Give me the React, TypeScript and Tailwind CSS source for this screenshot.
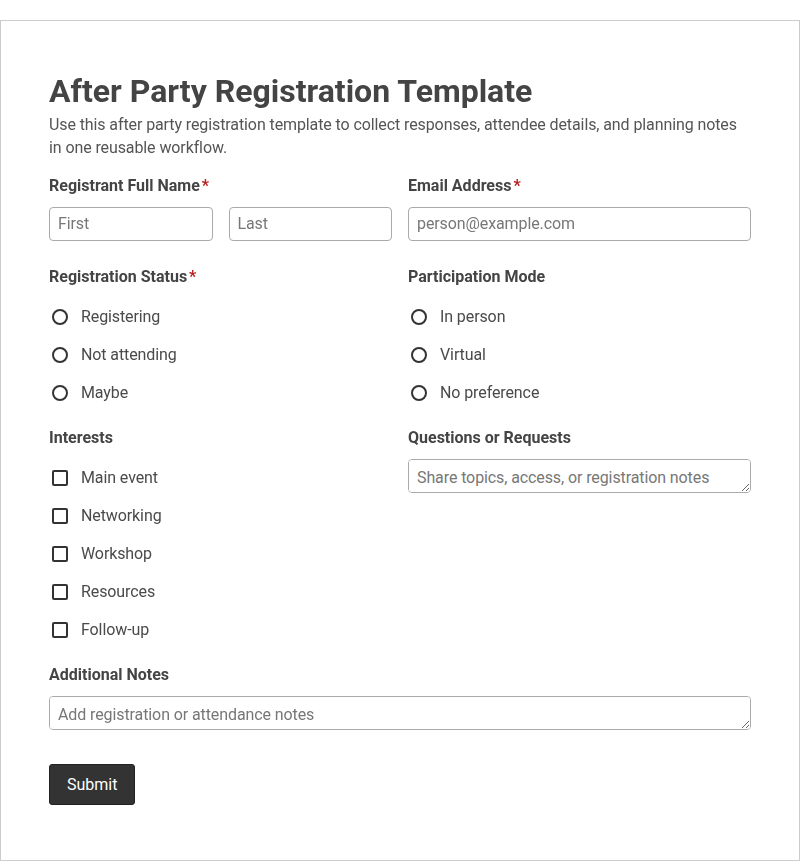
import React from "react";

const Req = () => <span className="text-[#b91c1c] ml-[2px]">*</span>;

const Label = ({ children }: { children: React.ReactNode }) => (
  <div className="pt-px text-base font-bold leading-6 text-[#444]">{children}</div>
);

const inputCls =
  "h-[34px] w-full rounded-[4px] border border-[#aaa] bg-white px-2 text-base tracking-[-0.1px] text-[#444] placeholder:text-[#777] outline-none";

const Radio = ({ label }: { label: string }) => (
  <label className="flex h-[38px] items-center">
    <span className="ml-[3px] h-4 w-4 rounded-full border-2 border-[#333]" />
    <span className="ml-[13px] text-base tracking-[-0.1px] text-[#4a4a4a]">{label}</span>
  </label>
);

const Check = ({ label }: { label: string }) => (
  <label className="flex h-[38px] items-center">
    <span className="ml-[3px] h-4 w-4 rounded-[2px] border-2 border-[#333]" />
    <span className="ml-[13px] text-base tracking-[-0.1px] text-[#4a4a4a]">{label}</span>
  </label>
);

export default function App() {
  return (
    <div className="min-h-screen bg-white pt-5 font-['Roboto',sans-serif]">
      <form className="border border-[#ccc] px-12 pt-12 pb-[55px]">
        <h1 className="text-[32px] font-bold leading-[44px] text-[#444]">
          After Party Registration Template
        </h1>
        <p className="mb-[14px] text-base leading-[23px] tracking-[-0.1px] text-[#555]">
          Use this after party registration template to collect responses, attendee details, and planning notes
          in one reusable workflow.
        </p>

        <div className="mb-[23px] grid grid-cols-2 gap-x-4">
          <div>
            <Label>
              Registrant Full Name<Req />
            </Label>
            <div className="mt-[9px] grid grid-cols-2 gap-x-4">
              <input className={`${inputCls} pb-[2px]`} placeholder="First" />
              <input className={`${inputCls} pb-[2px]`} placeholder="Last" />
            </div>
          </div>
          <div>
            <Label>
              Email Address<Req />
            </Label>
            <input className={`${inputCls} mt-[9px] pb-[2px]`} placeholder="person@example.com" />
          </div>
        </div>

        <div className="mb-[13px] grid grid-cols-2 gap-x-4">
          <div>
            <Label>
              Registration Status<Req />
            </Label>
            <div className="mt-[9px]">
              <Radio label="Registering" />
              <Radio label="Not attending" />
              <Radio label="Maybe" />
            </div>
          </div>
          <div>
            <Label>Participation Mode</Label>
            <div className="mt-[9px]">
              <Radio label="In person" />
              <Radio label="Virtual" />
              <Radio label="No preference" />
            </div>
          </div>
        </div>

        <div className="mb-[13px] grid grid-cols-2 gap-x-4">
          <div>
            <Label>Interests</Label>
            <div className="mt-[9px]">
              <Check label="Main event" />
              <Check label="Networking" />
              <Check label="Workshop" />
              <Check label="Resources" />
              <Check label="Follow-up" />
            </div>
          </div>
          <div>
            <Label>Questions or Requests</Label>
            <textarea
              rows={1}
              className={`${inputCls} mt-[9px] block resize-y pt-[6px] pb-[4px] leading-6`}
              placeholder="Share topics, access, or registration notes"
            />
          </div>
        </div>

        <div>
          <Label>Additional Notes</Label>
          <textarea
            rows={1}
            className={`${inputCls} mt-[9px] block resize-y pt-[6px] pb-[4px] leading-6`}
            placeholder="Add registration or attendance notes"
          />
        </div>

        <button
          type="button"
          className="mt-[34px] h-[41px] rounded-[3px] border border-[#222] bg-[#333] px-[17px] text-base text-white"
        >
          Submit
        </button>
      </form>
    </div>
  );
}
